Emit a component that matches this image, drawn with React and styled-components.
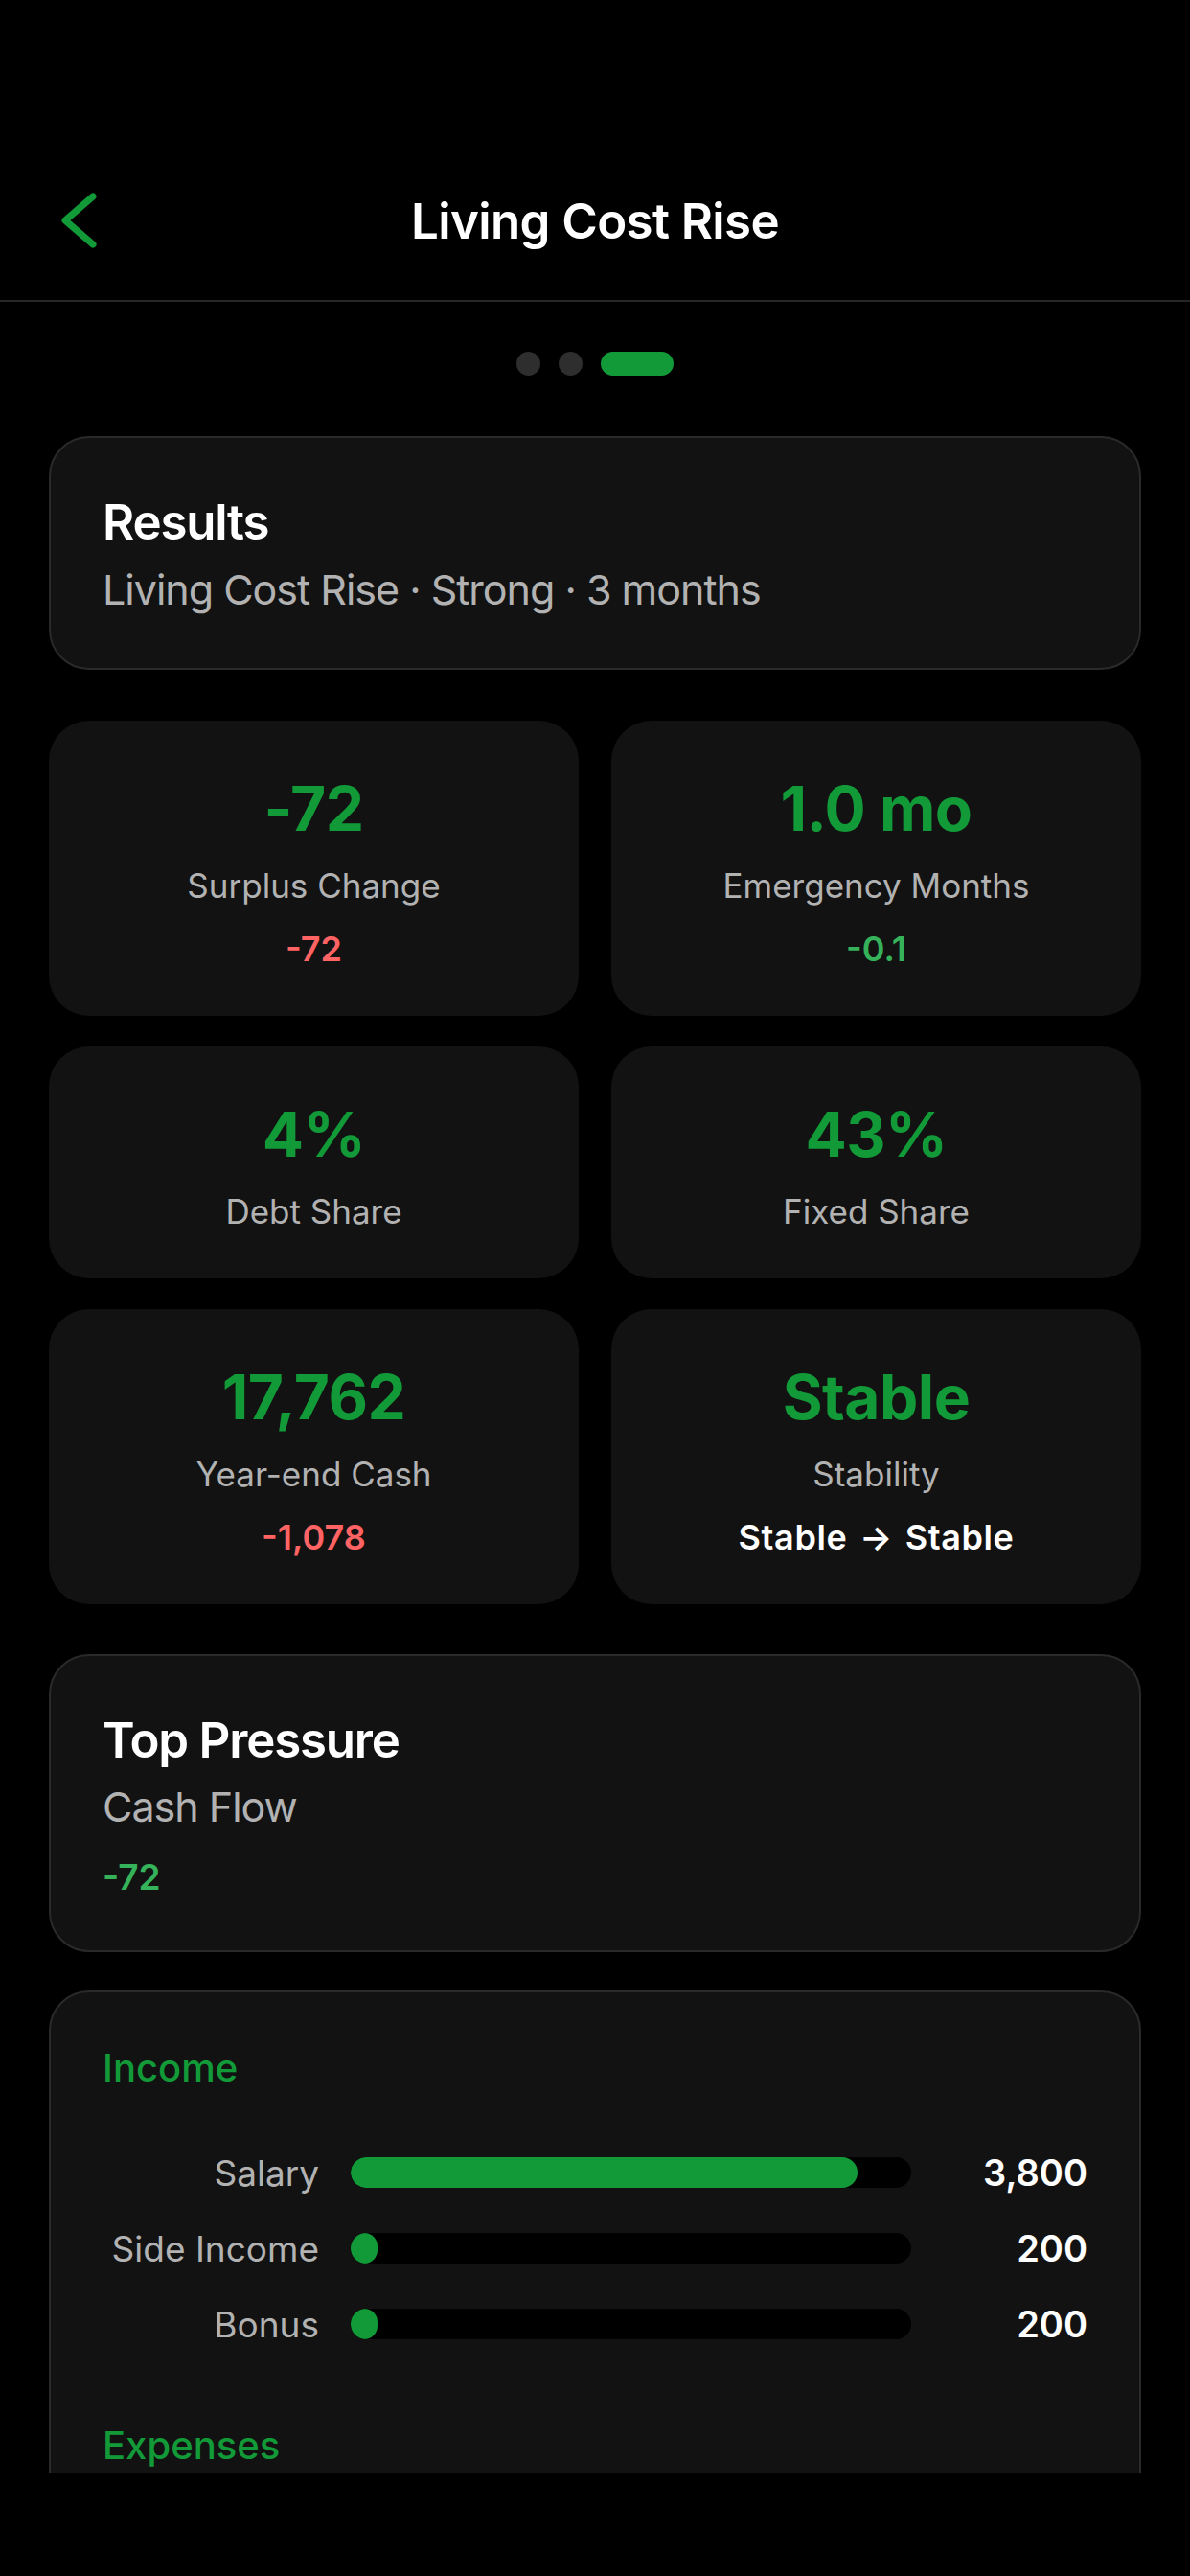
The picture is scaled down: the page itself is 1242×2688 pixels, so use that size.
import React from 'react';
import styled, { createGlobalStyle } from 'styled-components';

const GlobalStyle = createGlobalStyle`
  * { margin: 0; padding: 0; box-sizing: border-box; }
  html, body {
    width: 100%; height: 100%; margin: 0;
    background: #000; color: #fff;
    font-family: 'Inter', 'Noto Sans', sans-serif;
    overflow: hidden;
  }
  #root { width: 1242px; height: 2688px; }
`;

const GREEN = '#129a38';
const SOFT_GREEN = '#35b25a';
const RED = '#ff6363';
const GREY = '#b2b2b2';

const Screen = styled.div`
  width: 1242px; height: 2688px; display: flex; flex-direction: column;
  background: #000; padding-bottom: 108px; overflow: hidden;
`;

const NavBar = styled.header`
  display: grid; grid-template-columns: 1fr auto 1fr; align-items: center;
  height: 70px; box-sizing: content-box;
  padding: 195px 0 48px; border-bottom: 2px solid #262626;
`;

const BackButton = styled.button`
  justify-self: start; margin-left: 60px; background: none; border: 0;
  width: 44px; height: 60px; display: flex; cursor: pointer;
`;

const NavTitle = styled.h1`
  font-size: 51px; font-weight: 600; letter-spacing: -0.6px; line-height: 1;
  color: #fff;
`;

const Scroll = styled.main`
  flex: 1; min-height: 0; overflow: hidden;
`;

const Pager = styled.div`
  display: flex; justify-content: center; align-items: center; gap: 19px;
  margin-top: 51px; height: 26px;
`;

const Dot = styled.span`
  display: block; height: 25px; border-radius: 13px;
  width: ${p => (p.$active ? '76px' : '25px')};
  background: ${p => (p.$active ? GREEN : '#2e2e2e')};
`;

const Content = styled.div`
  display: flex; flex-direction: column; padding: 0 51px; margin-top: 63px;
`;

const Card = styled.section`
  background: #121212; border: 2px solid #2a2a2a; border-radius: 42px;
  padding: ${p => p.$pad || '62px 54px 60px'};
  margin-top: ${p => p.$top || '0'};
`;

const CardTitle = styled.h2`
  font-size: 51px; font-weight: 600; line-height: 1; letter-spacing: -1.2px; color: #fff;
`;

const CardSub = styled.p`
  font-size: 43px; font-weight: 400; line-height: 1; letter-spacing: -1px; color: ${GREY};
  margin-top: ${p => p.$gap || '24px'};
`;

const PressureValue = styled.p`
  font-size: 37px; font-weight: 600; line-height: 1; color: ${SOFT_GREEN};
  margin-top: 33px;
`;

const MetricGrid = styled.div`
  display: grid; grid-template-columns: 1fr 1fr; column-gap: 34px; row-gap: 32px;
  margin-top: 53px;
`;

const MetricCard = styled.div`
  background: #121212; border-radius: 42px;
  display: flex; flex-direction: column; align-items: center;
  padding: 60px 20px 52px;
`;

const MetricValue = styled.div`
  font-size: 64px; font-weight: 700; line-height: 1; color: ${GREEN}; letter-spacing: -0.5px;
`;

const MetricLabel = styled.div`
  font-size: 35px; font-weight: 400; line-height: 1; color: ${GREY}; margin-top: 31px;
`;

const MetricDelta = styled.div`
  font-size: 36px; font-weight: 600; line-height: 1; margin-top: 30px;
  color: ${p => p.$color};
  word-spacing: ${p => (p.$wide ? '3px' : '0')};
  letter-spacing: ${p => (p.$wide ? '0.6px' : '0')};
`;

const SectionHead = styled.h3`
  font-size: 40px; font-weight: 500; line-height: 1; color: ${GREEN};
  margin-top: ${p => p.$top || '0'};
`;

const BarList = styled.div`
  display: flex; flex-direction: column; gap: 47px; margin-top: 70px;
`;

const BarRow = styled.div`
  display: grid; grid-template-columns: 226px 1fr 151px; column-gap: 33px;
  align-items: center; height: 32px;
`;

const BarLabel = styled.span`
  font-size: 37px; color: ${GREY}; text-align: right; white-space: nowrap; line-height: 1;
`;

const Track = styled.div`
  height: 32px; border-radius: 16px; background: #000; overflow: hidden;
`;

const Fill = styled.div`
  height: 100%; border-radius: 16px; background: ${GREEN}; min-width: 28px;
`;

const BarValue = styled.span`
  font-size: 38px; font-weight: 600; color: #fff; text-align: right; line-height: 1;
`;

const metrics = [
  { value: '-72', label: 'Surplus Change', delta: '-72', color: RED },
  { value: '1.0 mo', label: 'Emergency Months', delta: '-0.1', color: SOFT_GREEN },
  { value: '4%', label: 'Debt Share' },
  { value: '43%', label: 'Fixed Share' },
  { value: '17,762', label: 'Year-end Cash', delta: '-1,078', color: RED },
  { value: 'Stable', label: 'Stability', delta: 'Stable → Stable', color: '#fff', wide: true },
];

const income = [
  { label: 'Salary', amount: 3800 },
  { label: 'Side Income', amount: 200 },
  { label: 'Bonus', amount: 200 },
];

const fmt = n => n.toLocaleString('en-US');

function Bars({ items }) {
  const total = items.reduce((s, i) => s + i.amount, 0);
  return (
    <BarList>
      {items.map(i => (
        <BarRow key={i.label}>
          <BarLabel>{i.label}</BarLabel>
          <Track>
            <Fill style={{ width: `${(i.amount / total) * 100}%` }} />
          </Track>
          <BarValue>{fmt(i.amount)}</BarValue>
        </BarRow>
      ))}
    </BarList>
  );
}

export default function App() {
  return (
    <Screen>
      <GlobalStyle />
      <NavBar>
        <BackButton aria-label="Back">
          <svg width="44" height="60" viewBox="0 0 44 60" fill="none">
            <path d="M37 5 L8 30 L37 55" stroke={GREEN} strokeWidth="7" strokeLinecap="round" strokeLinejoin="round" />
          </svg>
        </BackButton>
        <NavTitle>Living Cost Rise</NavTitle>
        <span />
      </NavBar>

      <Scroll>
        <Pager>
          <Dot />
          <Dot />
          <Dot $active />
        </Pager>

        <Content>
          <Card>
            <CardTitle>Results</CardTitle>
            <CardSub>Living Cost Rise · Strong · 3 months</CardSub>
          </Card>

          <MetricGrid>
            {metrics.map(m => (
              <MetricCard key={m.label}>
                <MetricValue>{m.value}</MetricValue>
                <MetricLabel>{m.label}</MetricLabel>
                {m.delta && <MetricDelta $color={m.color} $wide={m.wide}>{m.delta}</MetricDelta>}
              </MetricCard>
            ))}
          </MetricGrid>

          <Card $top="52px" $pad="62px 54px 58px">
            <CardTitle>Top Pressure</CardTitle>
            <CardSub $gap="23px">Cash Flow</CardSub>
            <PressureValue>-72</PressureValue>
          </Card>

          <Card $top="40px" $pad="59px 54px 200px">
            <SectionHead>Income</SectionHead>
            <Bars items={income} />
            <SectionHead $top="94px">Expenses</SectionHead>
          </Card>
        </Content>
      </Scroll>
    </Screen>
  );
}
